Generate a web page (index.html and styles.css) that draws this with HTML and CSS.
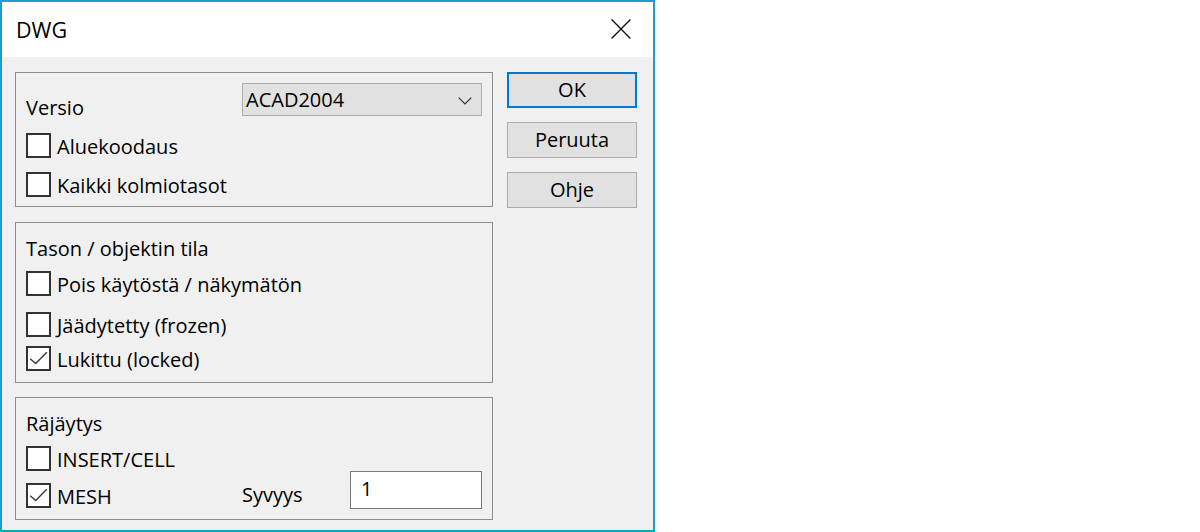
FILE: index.html
```html
<!DOCTYPE html>
<html lang="fi">
<head>
<meta charset="utf-8">
<title>DWG</title>
<link rel="stylesheet" href="styles.css">
</head>
<body>
<div class="dialog">
  <div class="titlebar">
    <span class="title">DWG</span>
    <svg class="close" width="20" height="20" viewBox="0 0 20 20" aria-hidden="true">
      <path d="M0.6 0.6 L19.4 19.4 M19.4 0.6 L0.6 19.4" stroke="#111" stroke-width="1.35" fill="none"/>
    </svg>
  </div>
  <div class="content">
    <div class="groups">
      <div class="group g1">
        <div class="pair">
          <span class="text versio">Versio</span>
          <div class="combo">
            <span class="text">ACAD2004</span>
            <svg class="chev" width="14" height="8" viewBox="0 0 14 8" aria-hidden="true">
              <path d="M0.7 0.7 L7 7 L13.3 0.7" stroke="#333" stroke-width="1.2" fill="none"/>
            </svg>
          </div>
        </div>
        <div class="check c-a"><span class="box"></span><span class="text label">Aluekoodaus</span></div>
        <div class="check c-b"><span class="box"></span><span class="text label">Kaikki kolmiotasot</span></div>
      </div>

      <div class="group g2">
        <div class="text heading">Tason / objektin tila</div>
        <div class="check c-c"><span class="box"></span><span class="text label">Pois käytöstä / näkymätön</span></div>
        <div class="check c-d"><span class="box"></span><span class="text label">Jäädytetty (frozen)</span></div>
        <div class="check c-e"><span class="box checked"><svg width="21" height="21" viewBox="0 0 21 21" aria-hidden="true"><path d="M2.2 10.8 L7.7 15.6 L18.8 4.3" stroke="#3c3c3c" stroke-width="1.4" fill="none"/></svg></span><span class="text label">Lukittu (locked)</span></div>
      </div>

      <div class="group g3">
        <div class="text heading">Räjäytys</div>
        <div class="check c-c"><span class="box"></span><span class="text label">INSERT/CELL</span></div>
        <div class="meshrow">
          <div class="check"><span class="box checked"><svg width="21" height="21" viewBox="0 0 21 21" aria-hidden="true"><path d="M2.2 10.8 L7.7 15.6 L18.8 4.3" stroke="#3c3c3c" stroke-width="1.4" fill="none"/></svg></span><span class="text label">MESH</span></div>
          <span class="text syvyys">Syvyys</span>
          <div class="input"><span class="text">1</span></div>
        </div>
      </div>
    </div>

    <div class="buttons">
      <div class="btn default">OK</div>
      <div class="btn">Peruuta</div>
      <div class="btn">Ohje</div>
    </div>
  </div>
</div>
</body>
</html>
```

FILE: styles.css
```css
html, body {
  margin: 0;
  padding: 0;
  background: #ffffff;
}

body {
  font-family: "Open Sans", "Noto Sans", sans-serif;
  font-size: 20px;
  color: #000;
}

.dialog {
  box-sizing: border-box;
  width: 655px;
  height: 532px;
  border: 2px solid #18a0c7;
  display: flex;
  flex-direction: column;
  background: #f0f0f0;
}

.titlebar {
  height: 55px;
  flex: none;
  background: #ffffff;
  display: flex;
  justify-content: space-between;
  align-items: flex-start;
}

.title {
  font-size: 21.5px;
  line-height: 24px;
  padding: 16px 0 0 14px;
}

.close {
  margin: 17px 22px 0 0;
  display: block;
}

.content {
  flex: 1;
  display: flex;
  gap: 14px;
  padding: 15px 16px 0 13px;
}

.groups {
  width: 478px;
  display: flex;
  flex-direction: column;
}

.group {
  box-sizing: border-box;
  border: 1px solid #8c8c8c;
  padding: 0 10px;
}

.g1 { height: 135px; padding-top: 10px; }
.g2 { height: 161px; padding-top: 14px; margin-top: 15px; }
.g3 { height: 123px; padding-top: 14px; margin-top: 14px; }

.text {
  line-height: 24px;
  white-space: nowrap;
}

.label {
  line-height: 27px;
  margin-bottom: -3px;
}

.pair {
  display: grid;
  grid-template-columns: 216px 240px;
  align-items: start;
}

.versio { margin-top: 13px; }

.combo {
  box-sizing: border-box;
  height: 33px;
  border: 1px solid #adadad;
  background: #e1e1e1;
  display: flex;
  align-items: flex-start;
  justify-content: space-between;
  padding: 4px 9px 0 3px;
}

.chev {
  margin-top: 9px;
  display: block;
}

.check {
  display: flex;
  align-items: flex-start;
  gap: 6px;
}

.box {
  box-sizing: border-box;
  width: 25px;
  height: 25px;
  border: 2px solid #333333;
  background: #ffffff;
  flex: none;
  display: flex;
  align-items: center;
  justify-content: center;
}

.box svg { display: block; }

.c-a { margin-top: 13px; }
.c-b { margin-top: 14px; }
.c-c { margin-top: 10px; }
.c-d { margin-top: 16px; }
.c-e { margin-top: 9px; }

.meshrow {
  display: grid;
  grid-template-columns: 216px 108px 132px;
  align-items: end;
}

.meshrow .check { margin-bottom: 1px; }
.syvyys { margin-bottom: 2px; }

.input {
  box-sizing: border-box;
  height: 38px;
  border: 1px solid #7a7a7a;
  background: #ffffff;
  padding: 3px 0 0 10px;
}

.buttons {
  width: 130px;
  display: flex;
  flex-direction: column;
  gap: 14px;
}

.btn {
  box-sizing: border-box;
  height: 36px;
  border: 1px solid #adadad;
  background: #e1e1e1;
  text-align: center;
  line-height: 34px;
}

.btn.default {
  border: 2px solid #0078d7;
  line-height: 32px;
}
```
